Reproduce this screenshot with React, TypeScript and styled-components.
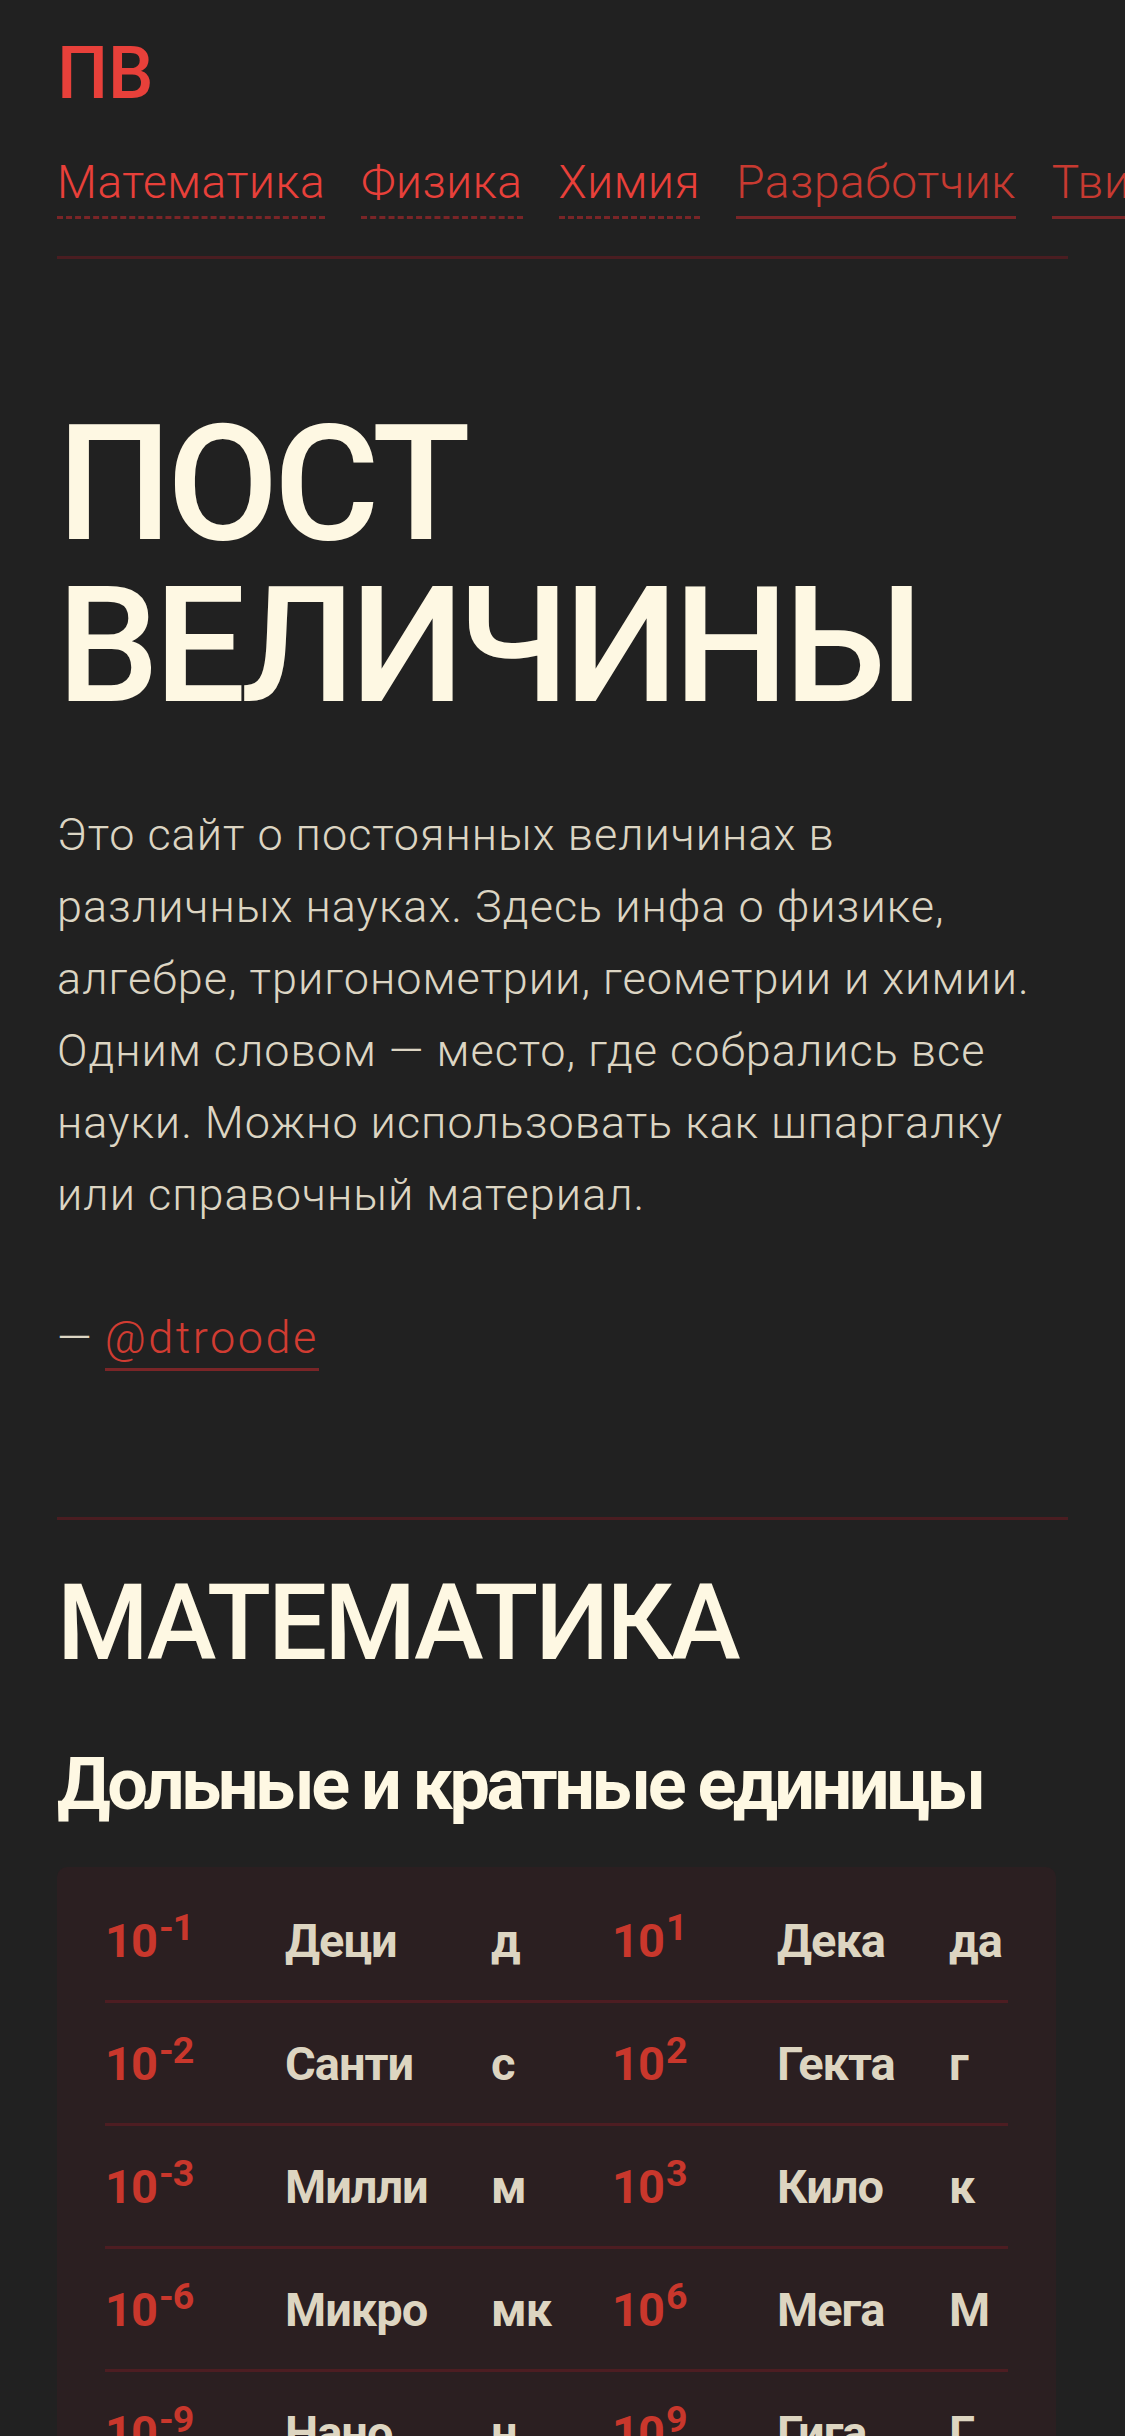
import styled, { createGlobalStyle } from "styled-components";

const GlobalStyle = createGlobalStyle`
  html, body {
    margin: 0;
    padding: 0;
    background: #212121;
    overflow-x: hidden;
  }
  body {
    font-family: Roboto, "Noto Sans", sans-serif;
    color: #dcd5c3;
  }
`;

const Page = styled.div`
  padding: 38px 57px 80px;
`;

const Logo = styled.div`
  font-size: 72px;
  line-height: 72px;
  font-weight: 500;
  color: #e8403a;
`;

const Nav = styled.nav`
  display: flex;
  gap: 36px;
  margin-top: 44px;
  white-space: nowrap;
  padding-bottom: 37px;
  border-bottom: 3px solid #4a1d21;
`;

const NavLink = styled.a<{ $external?: boolean }>`
  font-size: 46px;
  line-height: 56px;
  font-weight: 300;
  letter-spacing: 0.6px;
  text-decoration: none;
  padding-bottom: 6px;
  color: ${(p) => (p.$external ? "#c73a31" : "#e8403a")};
  border-bottom: 3px ${(p) => (p.$external ? "solid" : "dashed")} #7a2527;
`;

const Hero = styled.h1`
  margin: 144px 0 0;
  font-size: 162px;
  line-height: 162px;
  font-weight: 500;
  letter-spacing: -5px;
  color: #fef8e3;
`;

const Intro = styled.p`
  margin: 72px 0 0;
  font-size: 45px;
  line-height: 72px;
  font-weight: 300;
  letter-spacing: 1px;
`;

const Signature = styled.p`
  margin: 71px 0 0;
  font-size: 45px;
  line-height: 72px;
  font-weight: 300;
  letter-spacing: 1px;
`;

const Handle = styled.a`
  color: #d13c32;
  text-decoration: none;
  letter-spacing: 2.5px;
  padding-bottom: 4px;
  border-bottom: 3px solid #7a2527;
`;

const Section = styled.section`
  margin-top: 143px;
  border-top: 3px solid #4a1d21;
`;

const SectionTitle = styled.h2`
  margin: 49px 0 0;
  font-size: 105px;
  line-height: 110px;
  font-weight: 500;
  letter-spacing: -3px;
  color: #fef8e3;
`;

const GroupTitle = styled.h3`
  margin: 66px 0 0;
  font-size: 72px;
  line-height: 80px;
  font-weight: 700;
  letter-spacing: -3.5px;
  color: #fef8e3;
`;

const Card = styled.div`
  margin-top: 42px;
  width: fit-content;
  padding: 13px 48px;
  background: #2b1f21;
  border-radius: 10px;
`;

const Row = styled.div`
  display: grid;
  grid-template-columns: 180px 206px 121px 165px 172px 59px;
  align-items: center;
  height: 120px;
  font-size: 47px;
  font-weight: 700;
  letter-spacing: -1px;
  & + & {
    border-top: 3px solid #4d1d22;
  }
`;

const Power = styled.span`
  color: #c9372c;
  sup {
    font-size: 0.8em;
    line-height: 0;
    margin-left: 2px;
  }
`;

const Cell = styled.span`
  color: #ddd5c1;
`;

const prefixes: [string, string, string, string, string, string][] = [
  ["-1", "Деци", "д", "1", "Дека", "да"],
  ["-2", "Санти", "с", "2", "Гекта", "г"],
  ["-3", "Милли", "м", "3", "Кило", "к"],
  ["-6", "Микро", "мк", "6", "Мега", "М"],
  ["-9", "Нано", "н", "9", "Гига", "Г"],
  ["-12", "Пико", "п", "12", "Тера", "Т"],
];

export default function App() {
  return (
    <>
      <GlobalStyle />
      <Page>
        <Logo>ПВ</Logo>
        <Nav>
          <NavLink href="#math">Математика</NavLink>
          <NavLink href="#physics">Физика</NavLink>
          <NavLink href="#chem">Химия</NavLink>
          <NavLink $external href="#dev">
            Разработчик
          </NavLink>
          <NavLink $external href="#tw">
            Твиттер
          </NavLink>
        </Nav>
        <Hero>
          ПОСТ
          <br />
          ВЕЛИЧИНЫ
        </Hero>
        <Intro>
          Это сайт о постоянных величинах в различных науках. Здесь инфа о
          физике, алгебре, тригонометрии, геометрии и химии. Одним словом —
          место, где собрались все науки. Можно использовать как шпаргалку или
          справочный материал.
        </Intro>
        <Signature>
          — <Handle href="#author">@dtroode</Handle>
        </Signature>
        <Section id="math">
          <SectionTitle>МАТЕМАТИКА</SectionTitle>
          <GroupTitle>Дольные и кратные единицы</GroupTitle>
          <Card>
            {prefixes.map(([lowExp, lowName, lowSym, highExp, highName, highSym]) => (
              <Row key={lowName}>
                <Power>
                  10<sup>{lowExp}</sup>
                </Power>
                <Cell>{lowName}</Cell>
                <Cell>{lowSym}</Cell>
                <Power>
                  10<sup>{highExp}</sup>
                </Power>
                <Cell>{highName}</Cell>
                <Cell>{highSym}</Cell>
              </Row>
            ))}
          </Card>
        </Section>
      </Page>
    </>
  );
}
